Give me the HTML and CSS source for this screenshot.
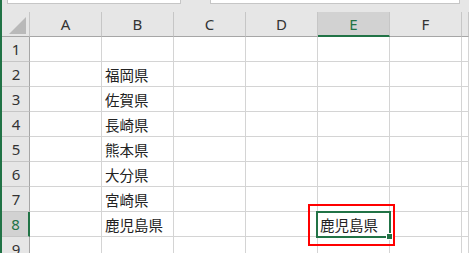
FILE: index.html
```html
<!DOCTYPE html>
<html lang="ja">
<head>
  <meta charset="UTF-8">
  <title>Sheet</title>
  <link rel="stylesheet" href="styles.css">
</head>
<body>
  <div class="window">
    <!-- name box / formula bar (cut off at top) -->
    <div class="toolbar">
      <div class="name-box"></div>
      <div class="formula-box"></div>
    </div>

    <div class="sheet">
      <!-- column headers -->
      <div class="corner">
        <svg width="17" height="17" viewBox="0 0 17 17"><polygon points="17,0 17,17 0,17" fill="#b9b9b9"/></svg>
      </div>
      <div class="col-head">A</div>
      <div class="col-head">B</div>
      <div class="col-head">C</div>
      <div class="col-head">D</div>
      <div class="col-head active">E</div>
      <div class="col-head">F</div>
      <div class="col-head"></div>

      <!-- row 1 -->
      <div class="row-head">1</div>
      <div class="cell"></div><div class="cell"></div><div class="cell"></div><div class="cell"></div><div class="cell"></div><div class="cell"></div><div class="cell"></div>

      <!-- row 2 -->
      <div class="row-head">2</div>
      <div class="cell"></div><div class="cell">福岡県</div><div class="cell"></div><div class="cell"></div><div class="cell"></div><div class="cell"></div><div class="cell"></div>

      <!-- row 3 -->
      <div class="row-head">3</div>
      <div class="cell"></div><div class="cell">佐賀県</div><div class="cell"></div><div class="cell"></div><div class="cell"></div><div class="cell"></div><div class="cell"></div>

      <!-- row 4 -->
      <div class="row-head">4</div>
      <div class="cell"></div><div class="cell">長崎県</div><div class="cell"></div><div class="cell"></div><div class="cell"></div><div class="cell"></div><div class="cell"></div>

      <!-- row 5 -->
      <div class="row-head">5</div>
      <div class="cell"></div><div class="cell">熊本県</div><div class="cell"></div><div class="cell"></div><div class="cell"></div><div class="cell"></div><div class="cell"></div>

      <!-- row 6 -->
      <div class="row-head">6</div>
      <div class="cell"></div><div class="cell">大分県</div><div class="cell"></div><div class="cell"></div><div class="cell"></div><div class="cell"></div><div class="cell"></div>

      <!-- row 7 -->
      <div class="row-head">7</div>
      <div class="cell"></div><div class="cell">宮崎県</div><div class="cell"></div><div class="cell"></div><div class="cell"></div><div class="cell"></div><div class="cell"></div>

      <!-- row 8 (selected cell E8) -->
      <div class="row-head active">8</div>
      <div class="cell"></div><div class="cell">鹿児島県</div><div class="cell"></div><div class="cell"></div>
      <div class="cell selected">
        鹿児島県
        <span class="highlight"></span>
        <span class="cursor"></span>
        <span class="handle"></span>
      </div>
      <div class="cell"></div><div class="cell"></div>

      <!-- row 9 -->
      <div class="row-head">9</div>
      <div class="cell"></div><div class="cell"></div><div class="cell"></div><div class="cell"></div><div class="cell"></div><div class="cell"></div><div class="cell"></div>
    </div>
  </div>
</body>
</html>
```

FILE: styles.css
```css
body {
  margin: 0;
  overflow: hidden;
  background-color: #fff;
  font-family: "Noto Sans CJK JP", "Noto Sans", sans-serif;
}

*, *::before, *::after {
  box-sizing: border-box;
}

.window {
  border-left: 2px solid #217346;
  height: 253px;
}

/* Top bar */
.toolbar {
  height: 12px;
  background-color: #e6e6e6;
  display: flex;
  align-items: flex-start;
}

.name-box,
.formula-box {
  height: 4px;
  background-color: #fff;
  border: 1px solid #c6c6c6;
  border-top: none;
}

.name-box {
  margin-left: 5px;
  width: 174px;
}

.formula-box {
  margin-left: 29px;
  width: 250px;
}

/* Grid */
.sheet {
  display: grid;
  grid-template-columns: 28px repeat(6, 72px) 1fr;
  grid-template-rows: repeat(10, 25px);
}

.corner {
  background-color: #e6e6e6;
  border-right: 1px solid #c6c6c6;
  border-bottom: 1px solid #a6a6a6;
  display: flex;
  justify-content: flex-end;
  align-items: flex-end;
  padding: 0 3px 2px 0;
}

.col-head {
  background-color: #e6e6e6;
  border-right: 1px solid #c6c6c6;
  border-bottom: 1px solid #a6a6a6;
  color: #333;
  font-family: "Noto Sans", sans-serif;
  font-size: 15px;
  display: flex;
  align-items: center;
  justify-content: center;
}

.col-head.active {
  background-color: #d2d2d2;
  color: #217346;
  border-bottom: 2px solid #217346;
}

.row-head {
  background-color: #e6e6e6;
  border-right: 1px solid #a6a6a6;
  border-bottom: 1px solid #c6c6c6;
  color: #333;
  font-family: "Noto Sans", sans-serif;
  font-size: 15px;
  display: flex;
  align-items: center;
  justify-content: center;
  padding-left: 1px;
}

.row-head.active {
  background-color: #d2d2d2;
  color: #217346;
  border-right: 2px solid #217346;
}

.cell {
  border-right: 1px solid #d4d4d4;
  border-bottom: 1px solid #d4d4d4;
  font-size: 14.5px;
  color: #222;
  display: flex;
  align-items: center;
  padding-left: 3px;
  white-space: nowrap;
}

/* Selected cell */
.selected {
  position: relative;
  padding-left: 2px;
}

.cursor {
  position: absolute;
  top: -1px;
  left: -2px;
  right: -2px;
  bottom: -2px;
  border: 2px solid #217346;
}

.handle {
  position: absolute;
  right: -4px;
  bottom: -4px;
  width: 7px;
  height: 7px;
  background-color: #217346;
  border: 1px solid #fff;
}

.highlight {
  position: absolute;
  top: -8px;
  left: -10px;
  right: -6px;
  bottom: -10px;
  border: 2px solid #ff0000;
}
```
